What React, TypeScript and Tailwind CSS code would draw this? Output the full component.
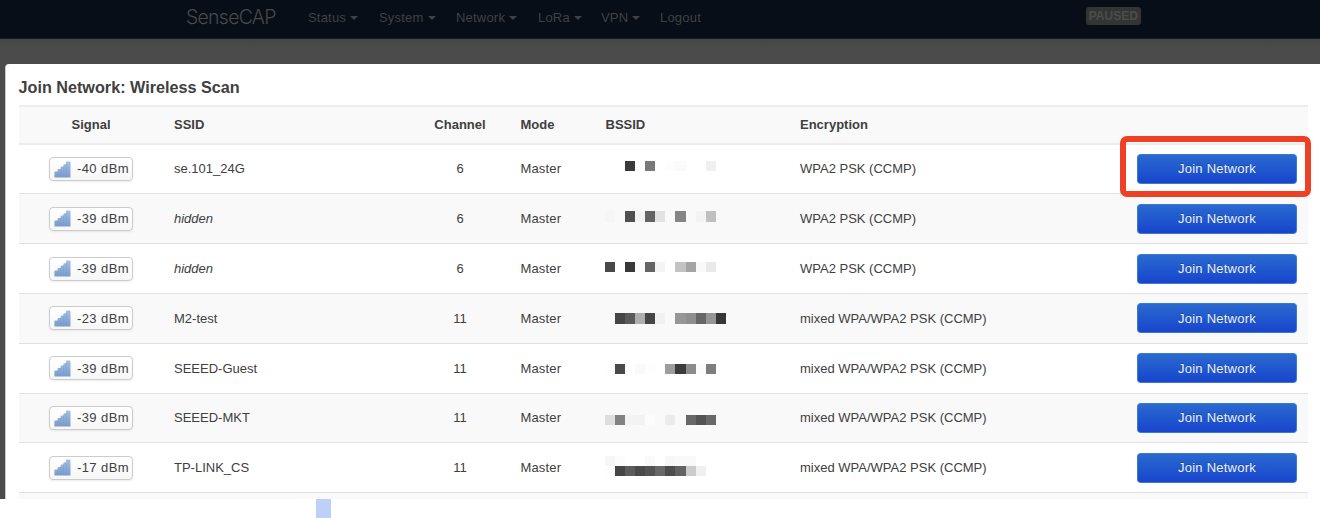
const menu = [
  { label: 'Status', caret: true, width: 'w-[71px]' },
  { label: 'System', caret: true, width: 'w-[77px]' },
  { label: 'Network', caret: true, width: 'w-[82px]' },
  { label: 'LoRa', caret: true, width: 'w-[63px]' },
  { label: 'VPN', caret: true, width: 'w-[59px]' },
  { label: 'Logout', caret: false, width: 'w-[50px]' },
];

// Each mask holds the grey levels of the blocks that hide a hardware address.
const networks = [
  { signal: '-40 dBm', ssid: 'se.101_24G', channel: 6, encryption: 'WPA2 PSK (CCMP)', pad: 'pt-[15.9px]', mask: [null, null, 59, null, 122, null, 253, 251, null, null, 240] },
  { signal: '-39 dBm', ssid: '', channel: 6, encryption: 'WPA2 PSK (CCMP)', pad: 'pt-[16.9px]', mask: [246, null, 80, 243, 100, 226, null, 133, null, 243, 192] },
  { signal: '-39 dBm', ssid: '', channel: 6, encryption: 'WPA2 PSK (CCMP)', pad: 'pt-[17.9px]', mask: [72, null, 56, 250, 100, 244, null, 195, 164, 249, 233] },
  { signal: '-23 dBm', ssid: 'M2-test', channel: 11, encryption: 'mixed WPA/WPA2 PSK (CCMP)', pad: 'pt-[19.3px]', mask: [null, 70, 90, 175, 70, 241, null, 150, 142, 102, 149, 55] },
  { signal: '-39 dBm', ssid: 'SEEED-Guest', channel: 11, encryption: 'mixed WPA/WPA2 PSK (CCMP)', pad: 'pt-[20.3px]', mask: [254, 74, null, 249, 254, null, 157, 59, 140, 251, 126] },
  { signal: '-39 dBm', ssid: 'SEEED-MKT', channel: 11, encryption: 'mixed WPA/WPA2 PSK (CCMP)', pad: 'pt-[21.4px]', mask: [222, 130, 243, 243, 252, null, 236, null, 104, 84, 105] },
  { signal: '-17 dBm', ssid: 'TP-LINK_CS', channel: 11, encryption: 'mixed WPA/WPA2 PSK (CCMP)', pad: 'pt-[12.6px]', lead: [246, 252, null, null, 250, null, 247, 249, 249], mask: [253, 70, 92, 74, 84, 104, 77, 98, 203, 240] },
];

const columns = 'grid grid-cols-[145px_260px_73px_85px_194.5px_1fr_183px] items-center';

function Blocks({ levels }: { levels: (number | null)[] }) {
  return (
    <div className="flex h-[10.2px]">
      {levels.map((v, i) => (
        <span
          key={i}
          className="w-[10.15px] shrink-0"
          style={v === null ? undefined : { backgroundColor: `rgb(${v},${v},${v})` }}
        />
      ))}
    </div>
  );
}

function SignalIcon() {
  return (
    <svg width="17" height="17" viewBox="0 0 17 17" className="shrink-0">
      <defs>
        <linearGradient id="bars" x1="0" y1="0" x2="0" y2="1">
          <stop offset="0" stopColor="#a3bfe2" />
          <stop offset="1" stopColor="#7b9dcd" />
        </linearGradient>
      </defs>
      <path
        d="M.4 16.4V11.2Q.4 10.4 1.2 10.4H3.6V9Q3.6 8 4.6 8H6.6V6.6Q6.6 5.6 7.6 5.6H9.4V4.2Q9.4 3.2 10.4 3.2H12V1.2Q12 .4 13 .4H15.6Q16.5 .4 16.5 1.2V16.4Z"
        fill="url(#bars)"
      />
      <path d="M3.7 10.5v5.9M6.7 8v8.4M9.5 5.6v10.8M12.2 3.2v13.2" stroke="#678dc2" strokeOpacity=".3" strokeWidth=".8" />
    </svg>
  );
}

export default function App() {
  return (
    <div className="flex h-[518px] w-[1320px] flex-col overflow-hidden bg-white font-['Liberation_Sans',Arial,sans-serif] text-[13px] text-[#404040]">
      <nav className="flex h-[39px] shrink-0 items-start border-b border-[#171e29] bg-[#070e18] pl-[186px] text-[#404143]">
        <div className="w-[122px] pt-[4px] font-[Inter,sans-serif] text-[19.5px] leading-[27px] font-light tracking-[-0.75px] text-[#48494b]">
          SenseCAP
        </div>
        {menu.map((m) => (
          <div key={m.label} className={`${m.width} flex items-center pt-[9px] leading-[18px] tracking-[0.2px]`}>
            {m.label}
            {m.caret && (
              <span className="ml-[4px] border-x-4 border-t-4 border-x-transparent border-t-[#404143]" />
            )}
          </div>
        ))}
        <div className="mt-[7px] ml-[375.5px] flex h-[17.5px] w-[55.5px] items-center justify-center rounded-[3px] bg-[#343434] pt-px text-[12px] leading-none font-bold text-[#4c4c4c]">
          PAUSED
        </div>
      </nav>

      <div className="flex h-[460px] shrink-0 flex-col bg-[#4b4b4b] bg-linear-to-b from-[#454545] to-[#4b4b4b] to-[8px] pt-[25px] pl-[5px]">
        <main className="min-h-0 flex-1 overflow-hidden rounded-tl-[4px] border-l border-[#c8c8c8] bg-white pr-3 pl-[12.5px]">
          <h1 className="h-[41px] pt-[13px] text-[16.2px] leading-[20px] font-bold">Join Network: Wireless Scan</h1>
          <div className="border-t-2 border-[#ececec]">
            <div className={`${columns} h-[35.7px] bg-[#f9f9f9] font-bold`}>
              <div className="text-center">Signal</div>
              <div className="pl-[10.5px]">SSID</div>
              <div className="text-center">Channel</div>
              <div className="pl-[24px]">Mode</div>
              <div className="pl-[24px]">BSSID</div>
              <div className="pl-[24px]">Encryption</div>
              <div />
            </div>
            {networks.map((n, i) => (
              <div
                key={i}
                className={`${columns} h-[49.8px] ${i === 0 ? 'h-[50.8px] border-t-2 border-[#ececec]' : 'border-t border-[#e0e0e0]'} ${i % 2 ? 'bg-[#f9f9f9]' : 'bg-white'}`}
              >
                <div className="flex justify-center">
                  <div className="flex h-[24px] w-[84px] items-center rounded-[4px] border border-[#cccccc] bg-linear-to-b from-white to-[#f7f7f7] pl-[4px] shadow-[0_1px_2px_rgba(0,0,0,0.08)]">
                    <SignalIcon />
                    <span className="ml-[6px] whitespace-nowrap tracking-[0.4px]">{n.signal}</span>
                  </div>
                </div>
                <div className="pl-[10.5px]">{n.ssid || <em>hidden</em>}</div>
                <div className="text-center">{n.channel}</div>
                <div className="pl-[24px] tracking-[0.15px]">Master</div>
                <div className={`self-start pl-[23px] ${n.pad}`}>
                  {n.lead && <Blocks levels={n.lead} />}
                  <Blocks levels={n.mask} />
                </div>
                <div className="pl-[24px]">{n.encryption}</div>
                <div className="relative pl-[12px]">
                  <button className="block h-[30px] w-[160px] rounded-[4px] border border-[#3b7ad3] border-t-[#3879d2] bg-linear-to-b from-[#2b69cf] to-[#1944cd] tracking-[0.25px] text-[#eef3fc] [text-shadow:0_-1px_0_rgba(0,0,0,0.25)]">
                    Join Network
                  </button>
                  {i === 0 && (
                    <span className="absolute top-[-18px] left-[-5px] h-[61px] w-[191px] rounded-[7px] border-6 border-[#ed4025]" />
                  )}
                </div>
              </div>
            ))}
            <div className="h-[10px] border-t border-[#e0e0e0] bg-[#f9f9f9]" />
          </div>
        </main>
      </div>
      <div className="ml-[316px] h-[19px] w-[15px] bg-[#bdd0f8]" />
    </div>
  );
}
